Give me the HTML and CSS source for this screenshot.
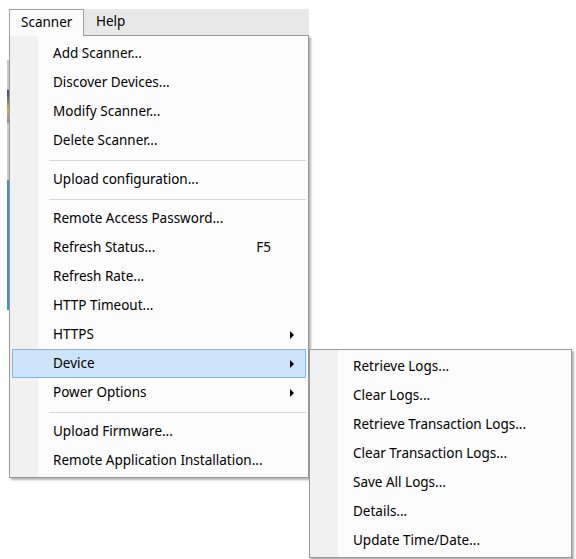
FILE: index.html
```html
<!DOCTYPE html>
<html lang="en">
<head>
    <meta charset="UTF-8">
    <title>Scanner Menu</title>
    <link rel="stylesheet" href="styles.css">
</head>
<body>
    <div class="screen">
        <!-- sliver of the window behind the menu -->
        <div class="app-edge">
            <div class="edge-grey"></div>
            <div class="edge-mark"></div>
            <div class="edge-grey short"></div>
            <div class="edge-blue"></div>
        </div>

        <div class="menu-root">
            <div class="menubar">
                <span class="menubar-item open">Scanner</span>
                <span class="menubar-item">Help</span>
            </div>

            <div class="menu main-menu">
                <div class="menu-item"><span class="label">Add Scanner...</span></div>
                <div class="menu-item"><span class="label">Discover Devices...</span></div>
                <div class="menu-item"><span class="label">Modify Scanner...</span></div>
                <div class="menu-item"><span class="label">Delete Scanner...</span></div>
                <div class="menu-sep"></div>
                <div class="menu-item"><span class="label">Upload configuration...</span></div>
                <div class="menu-sep"></div>
                <div class="menu-item"><span class="label">Remote Access Password...</span></div>
                <div class="menu-item"><span class="label">Refresh Status...</span><span class="shortcut">F5</span></div>
                <div class="menu-item"><span class="label">Refresh Rate...</span></div>
                <div class="menu-item"><span class="label">HTTP Timeout...</span></div>
                <div class="menu-item has-sub"><span class="label">HTTPS</span><span class="arrow"></span></div>
                <div class="menu-item has-sub active">
                    <span class="label">Device</span><span class="arrow"></span>
                    <div class="menu submenu">
                        <div class="menu-item"><span class="label">Retrieve Logs...</span></div>
                        <div class="menu-item"><span class="label">Clear Logs...</span></div>
                        <div class="menu-item"><span class="label">Retrieve Transaction Logs...</span></div>
                        <div class="menu-item"><span class="label">Clear Transaction Logs...</span></div>
                        <div class="menu-item"><span class="label">Save All Logs...</span></div>
                        <div class="menu-item"><span class="label">Details...</span></div>
                        <div class="menu-item"><span class="label">Update Time/Date...</span></div>
                    </div>
                </div>
                <div class="menu-item has-sub"><span class="label">Power Options</span><span class="arrow"></span></div>
                <div class="menu-sep"></div>
                <div class="menu-item"><span class="label">Upload Firmware...</span></div>
                <div class="menu-item"><span class="label">Remote Application Installation...</span></div>
            </div>
        </div>
    </div>
</body>
</html>
```

FILE: styles.css
```css
body {
    margin: 0;
    background-color: #ffffff;
    font-family: "Noto Sans", "Open Sans", sans-serif;
    font-size: 13.5px;
    color: #000000;
    overflow: hidden;
}
.screen {
    display: flex;
    align-items: flex-start;
    padding-left: 7px;
    height: 559px;
}
.app-edge {
    width: 2px;
    display: flex;
    flex-direction: column;
    margin-top: 60px;
}
.edge-grey {
    height: 30px;
    background-color: #c9c9c9;
}
.edge-grey.short {
    height: 57px;
}
.edge-mark {
    height: 33px;
    background: linear-gradient(#3b3f7a, #c8b45a 60%, #8a8fa8);
}
.edge-blue {
    height: 130px;
    background-color: #3e8fdf;
}
.menu-root {
    margin-top: 9px;
    width: 300px;
}
.menubar {
    display: flex;
    height: 26px;
    background-color: #e8e8e8;
}
.menubar-item {
    padding: 0 11px 0 12px;
    line-height: 25px;
}
.menubar-item.open {
    background-color: #fcfcfc;
    border: 1px solid #a0a0a0;
    border-bottom: none;
    padding-left: 11px;
    padding-right: 12px;
    line-height: 24px;
    width: 50px;
    position: relative;
    z-index: 2;
    height: 26px;
}
.menu {
    border: 1px solid #979797;
    background: linear-gradient(to right, #f1f1f1 0 28px, #fcfcfc 28px);
    box-shadow: 2px 2px 2px rgba(0, 0, 0, 0.3);
}
.main-menu {
    padding: 3px 0 2px;
    position: relative;
    z-index: 1;
}
.menu-item {
    display: flex;
    align-items: center;
    height: 27px;
    margin: 0 2px;
    border: 1px solid transparent;
    white-space: nowrap;
}
.menu-item .label {
    flex: 1;
    padding-left: 40px;
    padding-bottom: 2px;
}
.menu-item .shortcut {
    margin-right: 34px;
    padding-bottom: 2px;
}
.menu-item .arrow {
    width: 0;
    height: 0;
    border-left: 4px solid #000000;
    border-top: 4px solid transparent;
    border-bottom: 4px solid transparent;
    margin-right: 11px;
}
.menu-item.active {
    background-color: #cde4fb;
    border-color: #80b6ea;
}
.menu-sep {
    height: 1px;
    margin: 5px 2px 4px 39px;
    background-color: #d5d5d5;
}
.has-sub {
    position: relative;
}
.submenu {
    position: absolute;
    left: 296px;
    top: -1px;
    width: 261px;
    padding: 2px 0;
    background: linear-gradient(to right, #f1f1f1 0 28px, #fcfcfc 28px);
}
```
